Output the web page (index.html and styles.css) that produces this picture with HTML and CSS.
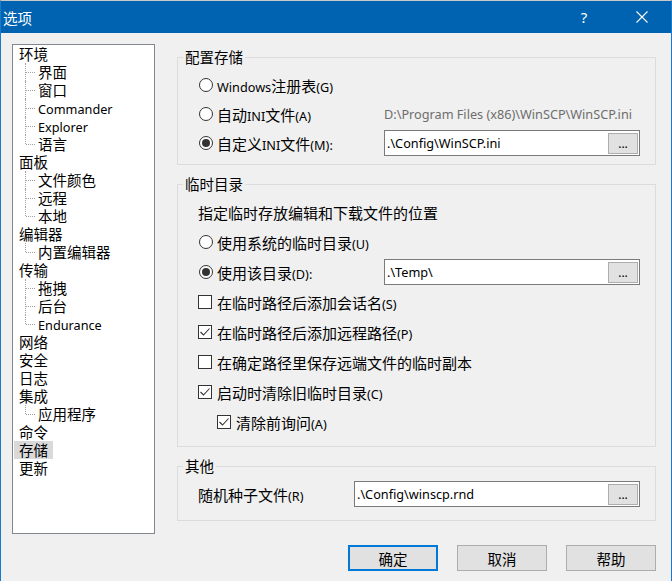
FILE: index.html
```html
<!DOCTYPE html>
<html lang="zh-CN">
<head>
    <meta charset="UTF-8">
    <title>选项</title>
    <link rel="stylesheet" href="styles.css">
</head>
<body>
    <div class="window">
        <div class="titlebar">
            <span class="title">选项</span>
            <span class="caption-btn help">?</span>
            <span class="caption-btn close">
                <svg width="12" height="12" viewBox="0 0 12 12"><path d="M0.5 0.5 L11.5 11.5 M11.5 0.5 L0.5 11.5" stroke="#fff" stroke-width="1.1" fill="none"/></svg>
            </span>
        </div>

        <div class="content">
            <div class="main">
                <ul class="tree">
                    <li><div class="node"><span class="label">环境</span></div>
                        <ul>
                            <li><div class="node"><span class="label">界面</span></div></li>
                            <li><div class="node"><span class="label">窗口</span></div></li>
                            <li><div class="node"><span class="label lat">Commander</span></div></li>
                            <li><div class="node"><span class="label lat">Explorer</span></div></li>
                            <li><div class="node"><span class="label">语言</span></div></li>
                        </ul>
                    </li>
                    <li><div class="node"><span class="label">面板</span></div>
                        <ul>
                            <li><div class="node"><span class="label">文件颜色</span></div></li>
                            <li><div class="node"><span class="label">远程</span></div></li>
                            <li><div class="node"><span class="label">本地</span></div></li>
                        </ul>
                    </li>
                    <li><div class="node"><span class="label">编辑器</span></div>
                        <ul>
                            <li><div class="node"><span class="label">内置编辑器</span></div></li>
                        </ul>
                    </li>
                    <li><div class="node"><span class="label">传输</span></div>
                        <ul>
                            <li><div class="node"><span class="label">拖拽</span></div></li>
                            <li><div class="node"><span class="label">后台</span></div></li>
                            <li><div class="node"><span class="label lat">Endurance</span></div></li>
                        </ul>
                    </li>
                    <li><div class="node"><span class="label">网络</span></div></li>
                    <li><div class="node"><span class="label">安全</span></div></li>
                    <li><div class="node"><span class="label">日志</span></div></li>
                    <li><div class="node"><span class="label">集成</span></div>
                        <ul>
                            <li><div class="node"><span class="label">应用程序</span></div></li>
                        </ul>
                    </li>
                    <li><div class="node"><span class="label">命令</span></div></li>
                    <li><div class="node"><span class="label selected">存储</span></div></li>
                    <li><div class="node"><span class="label">更新</span></div></li>
                </ul>

                <div class="pages">
                    <fieldset class="group group-storage">
                        <legend>配置存储</legend>
                        <div class="group-body">
                            <div class="row">
                                <span class="radio"></span>
                                <span class="text"><span class="lat">Windows</span>注册表<span class="lat">(G)</span></span>
                            </div>
                            <div class="row">
                                <span class="radio"></span>
                                <span class="text">自动<span class="lat">INI</span>文件<span class="lat">(A)</span></span>
                                <span class="path">D:\Program Files (x86)\WinSCP\WinSCP.ini</span>
                            </div>
                            <div class="row">
                                <span class="radio on"></span>
                                <span class="text">自定义<span class="lat">INI</span>文件<span class="lat">(M):</span></span>
                                <div class="field">
                                    <span class="field-text">.\Config\WinSCP.ini</span>
                                    <span class="browse">...</span>
                                </div>
                            </div>
                        </div>
                    </fieldset>

                    <fieldset class="group group-temp">
                        <legend>临时目录</legend>
                        <div class="group-body">
                            <div class="row">
                                <span class="text">指定临时存放编辑和下载文件的位置</span>
                            </div>
                            <div class="row">
                                <span class="radio"></span>
                                <span class="text">使用系统的临时目录<span class="lat">(U)</span></span>
                            </div>
                            <div class="row">
                                <span class="radio on"></span>
                                <span class="text">使用该目录<span class="lat">(D):</span></span>
                                <div class="field">
                                    <span class="field-text">.\Temp\</span>
                                    <span class="browse">...</span>
                                </div>
                            </div>
                            <div class="row">
                                <span class="check"></span>
                                <span class="text">在临时路径后添加会话名<span class="lat">(S)</span></span>
                            </div>
                            <div class="row">
                                <span class="check on"><svg width="12" height="12" viewBox="0 0 12 12"><path d="M1.5 6 L4.5 9 L10.5 2.5" stroke="#333" stroke-width="1.1" fill="none"/></svg></span>
                                <span class="text">在临时路径后添加远程路径<span class="lat">(P)</span></span>
                            </div>
                            <div class="row">
                                <span class="check"></span>
                                <span class="text">在确定路径里保存远端文件的临时副本</span>
                            </div>
                            <div class="row">
                                <span class="check on"><svg width="12" height="12" viewBox="0 0 12 12"><path d="M1.5 6 L4.5 9 L10.5 2.5" stroke="#333" stroke-width="1.1" fill="none"/></svg></span>
                                <span class="text">启动时清除旧临时目录<span class="lat">(C)</span></span>
                            </div>
                            <div class="row sub">
                                <span class="check on"><svg width="12" height="12" viewBox="0 0 12 12"><path d="M1.5 6 L4.5 9 L10.5 2.5" stroke="#333" stroke-width="1.1" fill="none"/></svg></span>
                                <span class="text">清除前询问<span class="lat">(A)</span></span>
                            </div>
                        </div>
                    </fieldset>

                    <fieldset class="group group-misc">
                        <legend>其他</legend>
                        <div class="group-body">
                            <div class="row">
                                <span class="text">随机种子文件<span class="lat">(R)</span></span>
                                <div class="field wide">
                                    <span class="field-text">.\Config\winscp.rnd</span>
                                    <span class="browse">...</span>
                                </div>
                            </div>
                        </div>
                    </fieldset>
                </div>
            </div>

            <div class="actions">
                <button class="btn default">确定</button>
                <button class="btn">取消</button>
                <button class="btn">帮助</button>
            </div>
        </div>
    </div>
</body>
</html>
```

FILE: styles.css
```css
* {
    box-sizing: border-box;
}

body {
    margin: 0;
    background: #f0f0f0;
    font-family: "Noto Sans CJK SC", sans-serif;
    font-size: 15px;
    color: #000;
}

.window {
    width: 672px;
    height: 581px;
    border-top: 1px solid #c8c8c8;
    border-left: 1px solid #1979ca;
    border-right: 1px solid #1979ca;
    background: #f0f0f0;
    overflow: hidden;
}

.lat {
    font-family: "Noto Sans", sans-serif;
    font-size: 12.7px;
}

/* title bar */
.titlebar {
    height: 32px;
    background: #0063b1;
    color: #fff;
    display: flex;
    align-items: center;
    padding-left: 2px;
}

.title {
    flex: 1;
    font-size: 14.5px;
}

.caption-btn {
    width: 58px;
    height: 32px;
    display: flex;
    align-items: center;
    justify-content: center;
}

.help {
    font-family: "Noto Sans", sans-serif;
    font-size: 15px;
}

/* content */
.content {
    padding: 11px 15px 0 11px;
}

.main {
    display: flex;
    align-items: flex-start;
    gap: 22px;
}

/* tree */
.tree {
    width: 143px;
    height: 490px;
    margin: 0;
    padding: 0;
    list-style: none;
    border: 1px solid #828790;
    background: #fff;
    font-size: 14.5px;
}

.tree ul {
    margin: 0;
    padding: 0;
    list-style: none;
}

.node {
    height: 18px;
    line-height: 18px;
    padding-left: 1px;
}

.tree ul .node {
    padding-left: 20px;
}

.label {
    display: inline-block;
    height: 18px;
    padding: 0 5px;
}

.label.selected {
    background: #d9d9d9;
}

.tree ul li {
    position: relative;
}

.tree ul li::before {
    content: '';
    position: absolute;
    left: 12px;
    top: 0;
    bottom: 0;
    border-left: 1px dotted #a0a0a0;
}

.tree ul li:last-child::before {
    bottom: 9px;
}

.tree ul li::after {
    content: '';
    position: absolute;
    left: 13px;
    top: 9px;
    width: 9px;
    border-top: 1px dotted #a0a0a0;
}

/* groups */
.pages {
    width: 479px;
    margin-top: 4px;
    display: flex;
    flex-direction: column;
    gap: 10px;
}

.group {
    margin: 0;
    padding: 0;
    min-width: 0;
    border: 1px solid #dcdcdc;
}

.group legend {
    margin-left: 5px;
    padding: 0 2px;
    line-height: 18px;
    font-size: 14.5px;
}

.group-body {
    display: flex;
    flex-direction: column;
    gap: 3px;
    padding: 6px 15px 8px 20px;
}

.group-temp .group-body {
    gap: 4px;
    padding-bottom: 11px;
}

.group-misc .group-body {
    padding-bottom: 13px;
}

.row {
    display: flex;
    align-items: center;
    height: 26px;
}

.row .text {
    flex: 1;
    white-space: nowrap;
}

.row.sub {
    padding-left: 19px;
}

.path {
    width: 256px;
    font-family: "Noto Sans", sans-serif;
    font-size: 12.7px;
    color: #6d6d6d;
    white-space: nowrap;
}

.radio {
    width: 14px;
    height: 14px;
    margin: 0 4px 0 1px;
    border: 1px solid #333;
    border-radius: 50%;
    background: #fff;
    display: flex;
    align-items: center;
    justify-content: center;
}

.radio.on::after {
    content: '';
    width: 8px;
    height: 8px;
    border-radius: 50%;
    background: #333;
}

.check {
    width: 14px;
    height: 14px;
    margin-right: 5px;
    border: 1px solid #333;
    background: #fff;
    display: flex;
    align-items: center;
    justify-content: center;
}

.field {
    width: 256px;
    height: 26px;
    border: 1px solid #7a7a7a;
    background: #fff;
    display: flex;
    align-items: center;
    padding: 0 1px 0 2px;
}

.field.wide {
    width: 286px;
}

.field-text {
    flex: 1;
    font-family: "Noto Sans", sans-serif;
    font-size: 12.7px;
}

.browse {
    width: 30px;
    height: 21px;
    border: 1px solid #adadad;
    background: #e1e1e1;
    font-family: "Noto Sans", sans-serif;
    font-size: 12px;
    line-height: 19px;
    text-align: center;
}

/* dialog buttons */
.actions {
    display: flex;
    justify-content: flex-end;
    gap: 19px;
    margin-top: 11px;
}

.btn {
    width: 90px;
    height: 26px;
    padding: 0;
    border: 1px solid #adadad;
    background: #e1e1e1;
    font-family: "Noto Sans CJK SC", sans-serif;
    font-size: 14.5px;
    color: #000;
}

.btn.default {
    border: 2px solid #0078d7;
}
```
